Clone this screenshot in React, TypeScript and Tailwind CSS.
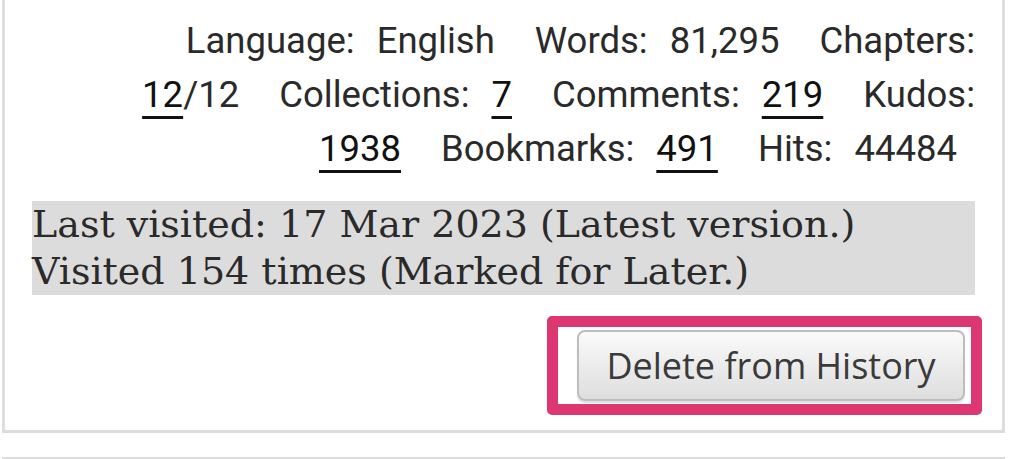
import React from "react";

function Dt({ children }: { children: React.ReactNode }) {
  return <span className="ml-[22px]">{children}</span>;
}
function Dd({ children }: { children: React.ReactNode }) {
  return <span className="ml-[22px] mr-[18px]">{children}</span>;
}
function L({ children }: { children: React.ReactNode }) {
  return (
    <span className="text-[#111] underline decoration-[3px] underline-offset-[9px] decoration-[#111]">
      {children}
    </span>
  );
}

export default function App() {
  return (
    <div className="w-[1010px] h-[459px] bg-white overflow-hidden relative">
      <div className="ml-[2px] w-[1003px] border-x-[3px] border-b-[3px] border-[#dddddd] px-[27px] pt-[14px] h-[433px] relative">
        <div
          className="text-right text-[#2a2a2a] text-[36.5px] leading-[54px]"
          style={{ fontFamily: "Roboto, 'Noto Sans', sans-serif" }}
        >
          <div className="whitespace-nowrap">
            <Dt>Language:</Dt>
            <Dd>English</Dd>
            <Dt>Words:</Dt>
            <Dd>81,295</Dd>
            <span className="ml-[22px]">Chapters:</span>
          </div>
          <div className="whitespace-nowrap">
            <Dd>
              <L>12</L>/12
            </Dd>
            <Dt>Collections:</Dt>
            <Dd>
              <L>7</L>
            </Dd>
            <Dt>Comments:</Dt>
            <Dd>
              <L>219</L>
            </Dd>
            <span className="ml-[22px]">Kudos:</span>
          </div>
          <div className="whitespace-nowrap">
            <Dd>
              <L>1938</L>
            </Dd>
            <Dt>Bookmarks:</Dt>
            <Dd>
              <L>491</L>
            </Dd>
            <Dt>Hits:</Dt>
            <Dd>44484</Dd>
          </div>
        </div>
        <div
          className="mt-[25px] bg-[#dcdcdc] text-[#2a2a2a] text-[38px] leading-[47px] h-[94px]"
          style={{ fontFamily: "'DejaVu Serif', serif" }}
        >
          <div className="whitespace-nowrap">Last visited: 17 Mar 2023 (Latest version.)</div>
          <div className="whitespace-nowrap">Visited 154 times (Marked for Later.)</div>
        </div>
        <div className="flex justify-end mt-[35px] pr-[10px]">
          <button
            className="h-[71px] w-[388px] rounded-[8px] border-[2px] border-[#bdbdbd] bg-gradient-to-b from-[#fafafa] to-[#dedede] text-[#3a3a3a] text-[36px] shadow-[0_2px_1px_rgba(0,0,0,0.12)]"
            style={{ fontFamily: "'Open Sans', sans-serif" }}
          >
            Delete from History
          </button>
        </div>
        <div className="absolute left-[542px] top-[316px] w-[435px] h-[99px] border-[11px] border-[#dc3673] rounded-[5px] pointer-events-none" />
      </div>
      <div className="ml-[2px] mt-[24px] w-[1003px] border-t-[3px] border-[#dddddd]" />
    </div>
  );
}
